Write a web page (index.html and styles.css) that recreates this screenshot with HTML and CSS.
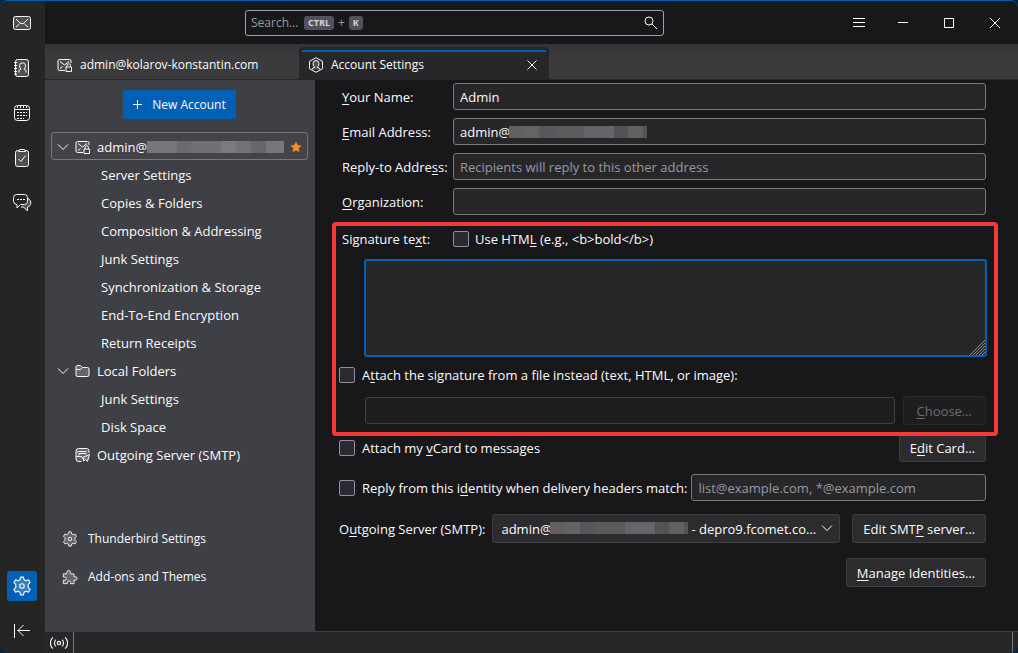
FILE: index.html
```html
<!doctype html>
<html lang="en">
  <head>
    <meta charset="utf-8">
    <title>Account Settings</title>
    <link rel="stylesheet" href="styles.css">
  </head>
  <body>
    <!-- icons used more than once -->
    <svg class="sprite" aria-hidden="true">
      <symbol id="icon-account" viewBox="0 0 16 16">
        <path d="M8 13.500H2.500A1.500 1.500 0 0 1 1 12V4A1.500 1.500 0 0 1 2.500 2.500h10A1.500 1.500 0 0 1 14 4v2" fill="#8883"/>
        <path d="M3 4.500l4.500 3.500L12 4.500M3 11.500l2.500-2"/>
        <path d="M9 10h5.500v4.500H9zM10 10V8.500a1.750 1.750 0 0 1 3.500 0V10"/>
      </symbol>
      <symbol id="icon-gear" viewBox="0 0 18 18">
        <path d="M7.700 1h2.600l.6 2.300 1.600.9 2.300-.7 1.500 2.400-1.700 1.700v2.800l1.700 1.700-1.500 2.400-2.300-.7-1.600.9-.6 2.300H7.700l-.6-2.300-1.600-.9-2.300.7-1.500-2.400 1.700-1.700V7.600L1.700 5.900l1.500-2.400 2.300.7 1.600-.9z" fill="#fff3" stroke-linejoin="round"/>
        <circle cx="9" cy="9" r="2"/>
      </symbol>
      <symbol id="icon-chevron" viewBox="0 0 12 12">
        <path d="M1 3.500l5 5 5-5"/>
      </symbol>
    </svg>

    <div class="window">
      <nav class="spaces" aria-label="Spaces">
        <button type="button" aria-label="Mail">
          <svg viewBox="0 0 20 20"><rect x="1.500" y="3.500" width="17" height="13" rx="2" fill="#fff3"/><path d="M4 6l4 4q2 1.500 4 0l4-4M4 14l3.500-3M16 14l-3.500-3"/></svg>
        </button>
        <button type="button" aria-label="Address Book">
          <svg viewBox="0 0 20 20"><rect x="3.500" y="1.500" width="13" height="17" rx="2" fill="#fff3"/><path d="M2 4.500h3M2 7.500h3M2 10.500h3M2 13.500h3M2 16h3"/><path d="M7 14.500v-1.500q0-1.500 2-2Q7.500 9.500 7.500 7.800a3 3 0 0 1 6 0q0 1.700-1.500 3.200 2 .5 2 2v1.500"/></svg>
        </button>
        <button type="button" aria-label="Calendar">
          <svg viewBox="0 0 20 20"><rect x="2.500" y="2.500" width="15" height="15" rx="3"/><path d="M3 6.500h14M5.500 3v2M8.500 3v2M11.500 3v2M14.500 3v2"/><path d="M5 9.500h10M5 12.500h10M5 15.500h7" stroke-dasharray="2 1"/></svg>
        </button>
        <button type="button" aria-label="Tasks">
          <svg viewBox="0 0 20 20"><rect x="3.500" y="2.500" width="13" height="16" rx="2" fill="#fff3"/><path d="M6.500 3.500l1-2h5l1 2z" fill="#27272a"/><path d="M6.500 11l2.500 2.500 4.500-6"/></svg>
        </button>
        <button type="button" aria-label="Chat">
          <svg viewBox="0 0 20 20"><path d="M16 5.500c4 1.500 3.500 8-.5 8.500v4l-4-4H9" fill="#fff3"/><path d="M4.500 1.500h8a3 3 0 0 1 3 3v4a3 3 0 0 1-3 3H8.500L5 15v-3.500a3.500 3.500 0 0 1-3.500-3v-4a3 3 0 0 1 3-3z" fill="#27272a"/><path d="M5 6.500h8" stroke-dasharray="2 1"/></svg>
        </button>
        <button type="button" class="active bottom" aria-label="Settings">
          <svg><use href="#icon-gear"/></svg>
        </button>
        <button type="button" aria-label="Collapse">
          <svg viewBox="0 0 20 20"><path d="M2.500 3v14M5.500 9.500H18M11.500 4L6 9.500l5.500 5.500"/></svg>
        </button>
      </nav>

      <div class="main">
        <header class="titlebar">
          <div class="search">
            <input type="text" id="search" placeholder="Search…" aria-label="Search">
            <div class="search-keys"><kbd>CTRL</kbd><span>+</span><kbd>K</kbd></div>
            <button type="button" aria-label="Search"><svg viewBox="0 0 16 16"><circle cx="7" cy="6" r="4"/><path d="M10 9l5 5"/></svg></button>
          </div>
          <div class="controls">
            <button type="button" class="menu" aria-label="Menu"><svg viewBox="0 0 12 12"><path d="M0 1.500h12M0 5.500h12M0 9.500h12"/></svg></button>
            <button type="button" aria-label="Minimize"><svg viewBox="0 0 12 12"><path d="M1 5.500h10"/></svg></button>
            <button type="button" aria-label="Maximize"><svg viewBox="0 0 12 12"><path d="M1.500 1.500h9v9h-9z"/></svg></button>
            <button type="button" aria-label="Close"><svg viewBox="0 0 12 12"><path d="M1 1l10 10M11 1L1 11"/></svg></button>
          </div>
        </header>

        <div class="tabs" role="tablist">
          <div class="tab" role="tab">
            <svg><use href="#icon-account"/></svg>
            <span>admin@kolarov-konstantin.com</span>
          </div>
          <div class="tab selected" role="tab" aria-selected="true">
            <svg viewBox="0 0 16 16"><path d="M8 .7l6.500 3.600v7.400L8 15.300 1.500 11.700V4.300z"/><path d="M4 12.500q.5-2 2.700-2.200Q5 9 5 6.500a3 3 0 0 1 6 0q0 2.500-1.700 3.800 2.200.2 2.700 2.200" fill="#fff3"/></svg>
            <span>Account Settings</span>
            <button type="button" aria-label="Close tab"><svg viewBox="0 0 12 12"><path d="M1.500 1.500l9 9M10.500 1.500l-9 9"/></svg></button>
          </div>
        </div>

        <div class="content">
          <aside class="sidebar">
            <button type="button" class="new-account">
              <svg viewBox="0 0 12 12"><path d="M6.500 1v9M2 5.500h9"/></svg>New Account
            </button>

            <ul class="tree">
              <li class="account selected">
                <svg class="chevron"><use href="#icon-chevron"/></svg>
                <svg><use href="#icon-account"/></svg>
                <a href="#">admin@</a>
                <span class="redacted"></span>
                <svg class="star" viewBox="0 0 12 12"><path d="M6 .5l1.700 3.600 3.900.5-2.900 2.700.8 3.900L6 9.300l-3.500 1.900.8-3.900L.4 4.600l3.900-.5z"/></svg>
              </li>
              <li><a href="#">Server Settings</a></li>
              <li><a href="#">Copies &amp; Folders</a></li>
              <li><a href="#">Composition &amp; Addressing</a></li>
              <li><a href="#">Junk Settings</a></li>
              <li><a href="#">Synchronization &amp; Storage</a></li>
              <li><a href="#">End-To-End Encryption</a></li>
              <li><a href="#">Return Receipts</a></li>
              <li class="account">
                <svg class="chevron"><use href="#icon-chevron"/></svg>
                <svg viewBox="0 0 16 16"><path d="M1 12V4a1.500 1.500 0 0 1 1.500-1.500h3L7.500 4.500h5A1.500 1.500 0 0 1 14 6v6a1.500 1.500 0 0 1-1.500 1.500h-10A1.500 1.500 0 0 1 1 12z" fill="#fff3"/><path d="M1.500 6.500h4l2-2"/></svg>
                <a href="#">Local Folders</a>
              </li>
              <li><a href="#">Junk Settings</a></li>
              <li><a href="#">Disk Space</a></li>
              <li class="account">
                <span class="chevron"></span>
                <svg viewBox="0 0 16 16"><path d="M6.500 14.500h-3A2.500 2.500 0 0 1 1 12V4a2.500 2.500 0 0 1 2.500-2.500h8A2.500 2.500 0 0 1 14 4v2" fill="#fff3"/><path d="M1.500 5.500l2-1h8M4 8.500v-2h7.500M1.500 9.500h5l1 2"/><path d="M14.500 7.500l-2 7-2-2-2 1.500v-3l-1-.5z" fill="#777"/></svg>
                <a href="#">Outgoing Server (SMTP)</a>
              </li>
            </ul>

            <div class="sidebar-footer">
              <a href="#"><svg><use href="#icon-gear"/></svg>Thunderbird Settings</a>
              <a href="#"><svg viewBox="0 0 18 18"><path d="M1.500 5.500h4V3.700a2 2 0 0 1 4 0v1.800h4v3.300h1.800a1.800 1.800 0 0 1 0 3.600h-1.800v4.100H9.500V15a1.700 1.700 0 0 0-3.400 0v1.500H1.500v-4h1.700a1.700 1.700 0 0 0 0-3.400H1.500z" fill="#fff3" stroke-linejoin="round"/></svg>Add-ons and Themes</a>
            </div>
          </aside>

          <form class="settings">
            <div class="fields">
              <label for="name"><u>Y</u>our Name:</label>
              <input type="text" id="name" value="Admin">
              <label for="email"><u>E</u>mail Address:</label>
              <div class="masked">
                <input type="text" id="email" value="admin@">
                <span class="redacted"></span>
              </div>
              <label for="reply-to">Reply-to Addre<u>s</u>s:</label>
              <input type="text" id="reply-to" placeholder="Recipients will reply to this other address">
              <label for="organization"><u>O</u>rganization:</label>
              <input type="text" id="organization">
            </div>

            <section class="signature">
              <div class="signature-head">
                <label for="signature">Signature te<u>x</u>t:</label>
                <input type="checkbox" id="use-html">
                <label for="use-html">Use HTM<u>L</u> (e.g., &lt;b&gt;bold&lt;/b&gt;)</label>
              </div>
              <div class="signature-text">
                <textarea id="signature"></textarea>
                <svg class="grip" viewBox="0 0 16 16"><path d="M1 16L16 1M4 16L16 4M7 16l9-9M10 16l6-6M13 16l3-3"/></svg>
              </div>
              <div class="check">
                <input type="checkbox" id="attach-file">
                <label for="attach-file">A<u>t</u>tach the signature from a file instead (text, HTML, or image):</label>
              </div>
              <div class="file">
                <input type="text" aria-label="Signature file" disabled>
                <button type="button" disabled><u>C</u>hoose…</button>
              </div>
            </section>

            <div class="options">
              <div class="check vcard">
                <input type="checkbox" id="vcard">
                <label for="vcard">Attach my <u>v</u>Card to messages</label>
                <button type="button">E<u>d</u>it Card…</button>
              </div>
              <div class="check">
                <input type="checkbox" id="reply-from">
                <label for="reply-from">Reply from this i<u>d</u>entity when delivery headers match:</label>
                <input type="text" placeholder="list@example.com, *@example.com" aria-label="Delivery headers">
              </div>
              <div class="smtp">
                <label for="smtp">O<u>u</u>tgoing Server (SMTP):</label>
                <div class="masked">
                  <select id="smtp">
                    <option>admin@&emsp;&emsp;&emsp;&emsp;&emsp;&emsp;&emsp;&emsp;&emsp;&emsp;&ensp;&nbsp;- depro9.fcomet.co…</option>
                  </select>
                  <span class="redacted"></span>
                  <svg class="chevron"><use href="#icon-chevron"/></svg>
                </div>
                <button type="button">Edit SMT<u>P</u> server…</button>
              </div>
              <button type="button" class="manage"><u>M</u>anage Identities…</button>
            </div>
          </form>
        </div>

        <footer class="statusbar">
          <svg viewBox="0 0 16 16"><circle cx="8" cy="8" r="1.500"/><path d="M5.300 5a4 4 0 0 0 0 6M10.700 5a4 4 0 0 1 0 6M2.500 3a7 7 0 0 0 0 10M13.500 3a7 7 0 0 1 0 10"/></svg>
          <div class="status-text"></div>
        </footer>
      </div>
    </div>
  </body>
</html>
```

FILE: styles.css
```css
:root {
  --accent: #0060b3;
  --bg: #18181b;
  --field: #27272a;
  --sidebar: #3f4045;
  --button: #2c2c2f;
  --button-border: #3f3f43;
  --field-border: #78787d;
  --text: #fbfbfe;
  --muted: #99999e;
  --highlight: #f23a39;
}

* {
  box-sizing: border-box;
}

body {
  margin: 0;
  background: #08243b;
  color: var(--text);
  font: 13px/18px "Open Sans", "Noto Sans", sans-serif;
}

button,
input,
select,
textarea {
  margin: 0;
  font: inherit;
  color: inherit;
}

button {
  padding: 0;
  border: none;
  background: none;
}

a {
  color: inherit;
  text-decoration: none;
}

u {
  text-decoration-thickness: 1px;
  text-underline-offset: 2px;
}

svg {
  display: block;
  flex: none;
  width: 16px;
  height: 16px;
  fill: none;
  stroke: currentColor;
}

.sprite {
  position: absolute;
  width: 0;
  height: 0;
}

.window {
  display: flex;
  height: 100vh;
  border-top: 1px solid var(--accent);
  border-radius: 8px;
  overflow: hidden;
}

/* Spaces toolbar */
.spaces {
  display: flex;
  flex-direction: column;
  align-items: center;
  gap: 15px;
  width: 45px;
  padding: 7px 1px 7px 0;
  background: #252526;
}

.spaces button {
  display: grid;
  place-items: center;
  width: 30px;
  height: 30px;
  border-radius: 3px;
}

.spaces svg {
  width: 20px;
  height: 20px;
}

.spaces .active {
  background: var(--accent);
}

.spaces .bottom {
  margin-top: auto;
}

.main {
  flex: 1;
  display: flex;
  flex-direction: column;
  min-width: 0;
}

/* Title bar */
.titlebar {
  display: grid;
  grid-template-columns: minmax(200px, 419px) 1fr;
  align-items: center;
  height: 43px;
  padding-left: 200px;
  background: var(--bg);
}

.search {
  display: flex;
  align-items: center;
  height: 26px;
  padding: 0 5px;
  border: 1px solid #a0a0a8;
  border-radius: 3px;
  font-size: 12px;
}

.search input {
  flex: none;
  width: 53px;
  padding: 0;
  border: none;
  background: none;
  outline: none;
}

.search-keys {
  display: flex;
  flex: 1;
  align-items: center;
  gap: 4px;
  color: var(--muted);
}

kbd {
  padding: 0 4px;
  border-radius: 3px;
  background: #52525e;
  color: #d4d4d8;
  font: bold 9px/14px "Open Sans", sans-serif;
}

.controls {
  display: flex;
  justify-content: flex-end;
}

.controls button {
  display: grid;
  place-items: center;
  width: 46px;
  height: 42px;
}

.controls .menu {
  width: 42px;
}

.controls svg,
.tab button svg {
  width: 12px;
  height: 12px;
}

/* Tabs */
.tabs {
  display: flex;
  align-items: flex-end;
  height: 36px;
  border-bottom: 1px solid #28282a;
  background: linear-gradient(#343436, #3b3b3d 12px);
  font-size: 12px;
}

.tab {
  display: flex;
  align-items: center;
  gap: 7px;
  width: 254px;
  height: 32px;
  padding: 3px 12px 0;
}

.tab.selected {
  position: relative;
  width: 250px;
  padding: 3px 11px 0 9px;
  border-radius: 4px 4px 0 0;
  background: var(--field);
}

.tab.selected::before {
  content: "";
  position: absolute;
  top: 3px;
  left: 3px;
  right: 3px;
  height: 2px;
  background: var(--accent);
}

.tab button {
  margin-left: auto;
}

.content {
  flex: 1;
  display: flex;
  min-height: 0;
}

/* Account tree */
.sidebar {
  display: flex;
  flex-direction: column;
  width: 270px;
  padding: 10px 7px 45px 6px;
  background: var(--sidebar);
}

.new-account {
  display: flex;
  align-items: center;
  align-self: center;
  gap: 9px;
  height: 29px;
  padding: 0 10px 0 8px;
  border-radius: 2px;
  background: var(--accent);
  font-size: 12px;
}

.new-account svg {
  width: 12px;
  height: 12px;
}

.tree {
  margin: 13px 0 0;
  padding: 0;
  list-style: none;
}

.tree li {
  display: flex;
  align-items: center;
  height: 28px;
  padding: 1px 0 0 50px;
}

.tree .account {
  gap: 6px;
  padding: 1px 5px 0;
  border: 1px solid transparent;
  border-radius: 3px;
}

.tree .selected {
  border-color: #77777c;
  background: #444448;
}

.tree .redacted {
  flex: 1;
  margin-left: -6px;
  background: linear-gradient(90deg, #77767a 0 22%, #6b6a6e 0 32%, #6e7072 0 54%, #7a7a7f 0 65%, #737276 0 76%, #6c6568 0 87%, #78777b 0);
}

.chevron {
  width: 12px;
  height: 12px;
}

.tree .star {
  width: 12px;
  height: 12px;
  fill: #ff8a2b;
  stroke: none;
}

.sidebar-footer {
  display: grid;
  gap: 20px;
  margin-top: auto;
  padding: 0 11px;
  font-size: 12px;
}

.sidebar-footer a {
  display: flex;
  align-items: center;
  gap: 10px;
}

/* blocked-out part of an address */
.redacted {
  height: 12px;
  background: linear-gradient(90deg, #625f63 0 11%, #626465 0 22%, #58575b 0 33%, #595b5d 0 54%, #626669 0 76%, #565155 0 86%, #636064 0 97%, #555458 0);
}

/* Settings form */
.settings {
  flex: 1;
  min-width: 0;
  padding: 3px 20px 0 17px;
  background: var(--bg);
}

.settings input[type="text"],
.settings textarea,
.settings select {
  min-width: 0;
  padding: 0 6px;
  border: 1px solid var(--field-border);
  border-radius: 3px;
  background: var(--field);
  outline: none;
}

.settings input[type="text"] {
  height: 27px;
}

::placeholder {
  color: var(--muted);
  opacity: 1;
}

.settings input[type="checkbox"] {
  appearance: none;
  flex: none;
  width: 16px;
  height: 16px;
  border: 1px solid #8f8f9d;
  border-radius: 2px;
  background: #2b2a33;
}

.settings button,
.settings select {
  height: 29px;
  border: 1px solid var(--button-border);
  border-radius: 3px;
  background: var(--button);
}

.settings button {
  padding: 0 10px;
  white-space: nowrap;
}

.settings button:disabled {
  padding: 0 13px;
  border-color: #28282b;
  background: #1e1e21;
  color: #6d6d70;
}

.settings input:disabled {
  border-color: #404044;
  background: #1e1e20;
}

.fields {
  display: grid;
  grid-template-columns: 103px 1fr;
  align-items: center;
  gap: 8px;
  padding: 0 12px 7px 10px;
}

.fields label {
  white-space: nowrap;
}

.masked {
  position: relative;
  display: grid;
}

.masked .redacted {
  position: absolute;
  top: 8px;
  left: 56px;
  width: 138px;
}

/* the highlight frame stays above the button edge */
.signature {
  position: relative;
  z-index: 1;
  padding: 4px 8px 7px 3px;
  border: 4px solid var(--highlight);
  border-radius: 4px;
}

.signature-head {
  display: grid;
  grid-template-columns: 105px 16px 1fr;
  align-items: center;
  gap: 0 6px;
  padding-left: 3px;
}

.signature-text {
  position: relative;
  margin: 11px -1px 9px 25px;
}

.settings textarea {
  display: block;
  width: 100%;
  height: 98px;
  border: 2px solid var(--accent);
  resize: none;
}

.grip {
  position: absolute;
  right: 2px;
  bottom: 2px;
  color: #8a8a8d;
}

.check,
.smtp {
  display: flex;
  align-items: center;
  gap: 7px;
}

.check input[type="text"] {
  flex: 1;
  margin-left: -3px;
}

.file {
  display: flex;
  align-items: center;
  gap: 8px;
  margin: 12px 0 0 26px;
}

.file input {
  flex: 1;
}

.options {
  display: flex;
  flex-direction: column;
  margin-top: -3px;
  padding: 0 12px 0 7px;
}

.vcard {
  margin-bottom: 12px;
}

.vcard button {
  margin-left: auto;
}

.smtp {
  margin: 13px 0 15px;
}

.smtp .masked {
  flex: 1;
  margin-right: 5px;
}

.smtp select {
  appearance: none;
  width: 100%;
  padding: 0 20px 0 8px;
}

.smtp .redacted {
  left: 58px;
}

.smtp .chevron {
  position: absolute;
  top: 8px;
  right: 7px;
}

.manage {
  align-self: flex-end;
}

/* Status bar */
.statusbar {
  display: flex;
  height: 22px;
  padding: 0 5px;
  border-top: 1px solid #3f3f43;
  background: var(--field);
}

.statusbar svg {
  width: 18px;
  height: 18px;
  margin: 2px 5px 0 0;
}

.status-text {
  flex: 1;
  border: solid #77777c;
  border-width: 0 1px;
}
```
